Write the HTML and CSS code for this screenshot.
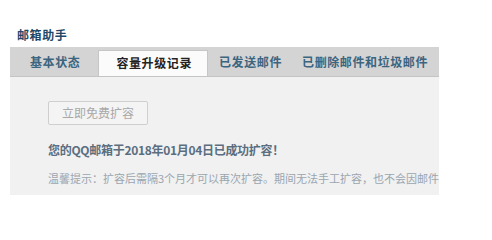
FILE: index.html
```html
<!DOCTYPE html>
<html lang="zh">
<head>
<meta charset="utf-8">
<link rel="stylesheet" href="styles.css">
</head>
<body>
<div class="page">
  <div class="title">邮箱助手</div>
  <div class="tabs">
    <div class="tab tab-first">基本状态</div>
    <div class="tab active">容量升级记录</div>
    <div class="tab tab-sent">已发送邮件</div>
    <div class="tab tab-trash">已删除邮件和垃圾邮件</div>
  </div>
  <div class="content">
    <div class="btn">立即免费扩容</div>
    <div class="done">您的QQ邮箱于2018年01月04日已成功扩容！</div>
    <div class="hint">温馨提示<span class="punc">：</span>扩容后需隔3个月才可以再次扩容。期间无法手工扩容<span class="punc">，</span>也不会因邮件堆积而自动扩容。</div>
  </div>
</div>
</body>
</html>
```
FILE: styles.css
```css
html, body {
  margin: 0;
  padding: 0;
  background: #ffffff;
}
.page {
  width: 429px;
  margin-left: 10px;
  padding-top: 28px;
  font-family: "Noto Sans CJK SC", "Liberation Sans", sans-serif;
}
.title {
  padding-left: 7px;
  font-size: 12px;
  letter-spacing: 0.6px;
  font-weight: bold;
  line-height: 14px;
  color: #1f4868;
  height: 19px;
}
.tabs {
  display: flex;
  height: 29px;
  background: #d4d4d4;
  border-bottom: 1px solid #c4c4c4;
  align-items: flex-end;
  overflow: hidden;
}
.tab {
  height: 29px;
  line-height: 29px;
  font-size: 12px;
  letter-spacing: 0.6px;
  font-weight: bold;
  color: #3c6580;
  white-space: nowrap;
  box-sizing: border-box;
}
.tab-first {
  padding: 0 18px 0 20px;
}
.tab-sent {
  padding: 0 9px 0 11px;
}
.tab-trash {
  padding: 0 0 0 11px;
}
.tab.active {
  height: 27px;
  line-height: 24px;
  padding: 0 15px 0 17px;
  margin-bottom: -1px;
  background: #fbfbfb;
  border: 1px solid #c6c6c6;
  border-bottom: none;
  color: #222222;
}
.content {
  background: #f1f1f1;
  height: 118px;
  padding: 24px 0 0 38px;
  box-sizing: border-box;
  overflow: hidden;
}
.btn {
  width: 98px;
  height: 22px;
  border: 1px solid #cfcfcf;
  border-radius: 2px;
  background: #f4f4f4;
  color: #a8a8a8;
  font-size: 12px;
  line-height: 22px;
  text-align: center;
}
.done {
  margin-top: 17px;
  font-size: 12px;
  letter-spacing: -0.3px;
  font-weight: bold;
  line-height: 16px;
  color: #5a6e80;
}
.hint {
  margin-top: 12px;
  font-size: 11px;
  line-height: 16px;
  color: #9aa6b0;
  white-space: nowrap;
}
.punc {
  font-family: "Noto Sans CJK TC", sans-serif;
}
```
